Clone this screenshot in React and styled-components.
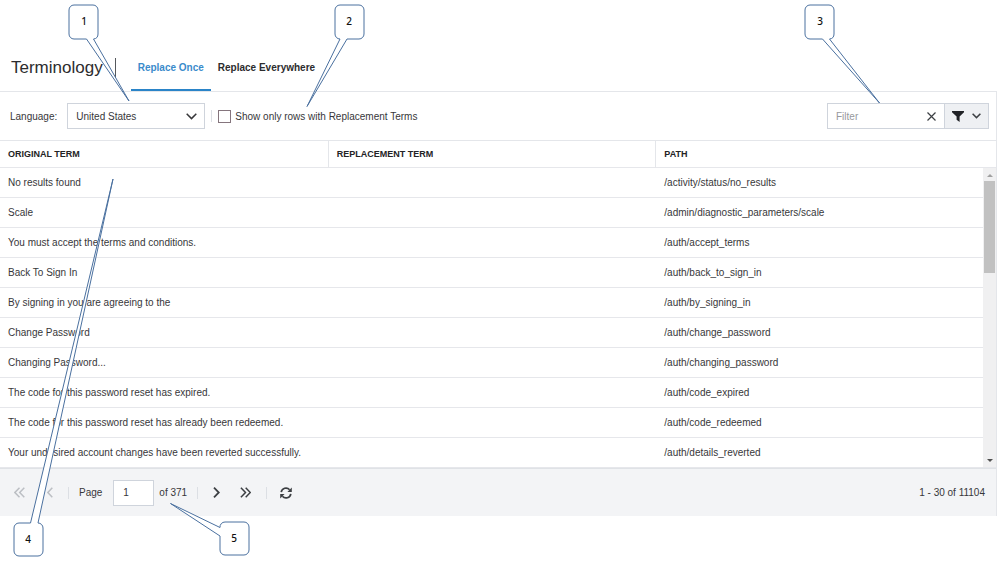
import React, { useState } from 'react';
import styled, { createGlobalStyle } from 'styled-components';

const GlobalStyle = createGlobalStyle`
  * {
    box-sizing: border-box;
  }

  body {
    margin: 0;
    background: #fff;
    color: #37373a;
    font-family: 'Liberation Sans', Arial, sans-serif;
    font-size: 10px;
  }

  button, input, select {
    margin: 0;
    color: inherit;
    font: inherit;
  }
`;

const StyledPage = styled.main`
  position: relative;
  min-height: 100vh;
  padding: 44px 1px 46px 0;
`;

const StyledHeader = styled.header`
  display: flex;
  align-items: center;
  height: 48px;
  padding-left: 11px;
  border-bottom: 1px solid #e4e6ea;

  h1 {
    margin: 0;
    padding-right: 12px;
    border-right: 1px solid #55585c;
    color: #2c2c2e;
    font-size: 17px;
    font-weight: 400;
    line-height: 19px;
  }
`;

const StyledTabs = styled.nav`
  display: flex;
  align-self: stretch;
  margin-left: 15px;
`;

const StyledTab = styled.button`
  padding: 2px 7px 0;
  border: 0;
  border-bottom: 2px solid ${({ $active }) => ($active ? '#2a84c8' : 'transparent')};
  background: none;
  color: ${({ $active }) => ($active ? '#3b8bcb' : '#2c2c2e')};
  font-weight: 700;
`;

const StyledFrame = styled.section`
  border-right: 1px solid #e4e6ea;
`;

const StyledToolbar = styled.div`
  display: flex;
  align-items: center;
  height: 48px;
  padding: 0 7px 0 10px;
`;

const StyledSelect = styled.div`
  position: relative;
  width: 138px;
  margin-left: 10px;

  select {
    width: 100%;
    height: 26px;
    padding: 0 8px;
    border: 1px solid #cfd4dc;
    border-radius: 0;
    background: #fff;
    appearance: none;
  }

  svg {
    position: absolute;
    top: 10px;
    right: 8px;
    pointer-events: none;
  }
`;

const StyledSeparator = styled.span`
  width: 1px;
  height: 12px;
  margin: 0 ${({ $gap = 6 }) => $gap}px;
  background: #dcdfe4;
`;

const StyledCheck = styled.label`
  display: flex;
  align-items: center;
  gap: 4px;

  input {
    width: 13px;
    height: 13px;
    border: 1px solid #85757d;
    background: #fff;
    appearance: none;
  }

  input:checked {
    background: #3b8bcb;
  }
`;

const StyledFilter = styled.div`
  display: flex;
  width: 162px;
  height: 26px;
  margin-left: auto;
  border: 1px solid #cfd4dc;

  input {
    flex: 1;
    min-width: 0;
    padding: 0 8px;
    border: 0;
    background: #fff;
  }

  input::placeholder {
    color: #97999c;
    opacity: 1;
  }
`;

const StyledIconButton = styled.button`
  display: flex;
  align-items: center;
  justify-content: center;
  width: ${({ $width = 26 }) => $width}px;
  padding: 0;
  border: 0;
  background: none;
  color: #3c3f43;

  &:disabled {
    color: #bcbfc4;
  }
`;

const StyledFilterMenu = styled(StyledIconButton)`
  gap: 8px;
  border-left: 1px solid #cfd4dc;
  background: #eef0f3;
`;

const StyledGrid = styled.div`
  position: relative;
  border-top: 1px solid #e4e6ea;
`;

const StyledTable = styled.table`
  width: 100%;
  border-collapse: separate;
  border-spacing: 0;
  table-layout: fixed;

  th,
  td {
    padding: 0 8px;
    border-bottom: 1px solid #e6e7eb;
    text-align: left;
    white-space: nowrap;
  }

  th {
    height: 27px;
    color: #232325;
    font-size: 9px;
    font-weight: 700;
    text-transform: uppercase;
  }

  th + th {
    border-left: 1px solid #e4e6ea;
  }

  td {
    height: 30px;
  }

  td + td {
    padding-left: 9px;
  }
`;

const StyledScrollbar = styled.div`
  position: absolute;
  top: 27px;
  right: 0;
  bottom: 1px;
  display: flex;
  flex-direction: column;
  align-items: center;
  width: 13px;
  padding: 6px 0 5px;
  background: #f0f0f1;
`;

const StyledThumb = styled.span`
  width: 11px;
  height: 92px;
  margin: 4px 0 auto;
  background: #c1c1c1;
`;

const StyledPager = styled.footer`
  display: flex;
  align-items: center;
  height: 48px;
  padding: 0 11px 0 6px;
  border-top: 1px solid #dfe2e6;
  background: #f3f4f6;

  label {
    margin-left: 10px;
  }

  input {
    width: 41px;
    height: 26px;
    margin: 0 5px 0 11px;
    padding: 0 9px;
    border: 1px solid #cfd4dc;
    background: #fff;
  }
`;

const StyledRange = styled.span`
  margin-left: auto;
`;

const StyledCallouts = styled.svg`
  position: absolute;
  top: 0;
  left: 0;
  pointer-events: none;

  path {
    fill: #fff;
    stroke: #4a709f;
    stroke-linejoin: round;
  }

  text {
    fill: #111;
    font-family: 'Noto Sans', 'Open Sans', sans-serif;
    font-size: 10px;
    font-weight: 500;
    text-anchor: middle;
  }
`;

const Icon = ({ width, height, d, strokeWidth = 1.5 }) => (
  <svg width={width} height={height} viewBox={`0 0 ${width} ${height}`} aria-hidden="true">
    <path d={d} fill="none" stroke="currentColor" strokeWidth={strokeWidth} />
  </svg>
);

const FunnelIcon = () => (
  <svg width="12" height="11" viewBox="0 0 12 11" aria-hidden="true">
    <path d="M0 0H12V1.3L7.6 5.6V11L4.6 8.8V5.6L0 1.3Z" fill="#202226" />
  </svg>
);

const RefreshIcon = () => (
  <svg width="12" height="12" viewBox="0 0 12 12" aria-hidden="true">
    <path
      d="M1.2 5.2A4.8 4.8 0 0 1 9.6 2.8M10.8 6.8A4.8 4.8 0 0 1 2.4 9.2"
      fill="none"
      stroke="currentColor"
      strokeWidth="1.7"
    />
    <path d="M11.8 .6V5H7.4ZM.2 11.4V7H4.6Z" fill="currentColor" />
  </svg>
);

const rows = [
  ['No results found', '/activity/status/no_results'],
  ['Scale', '/admin/diagnostic_parameters/scale'],
  ['You must accept the terms and conditions.', '/auth/accept_terms'],
  ['Back To Sign In', '/auth/back_to_sign_in'],
  ['By signing in you are agreeing to the', '/auth/by_signing_in'],
  ['Change Password', '/auth/change_password'],
  ['Changing Password...', '/auth/changing_password'],
  ['The code for this password reset has expired.', '/auth/code_expired'],
  ['The code for this password reset has already been redeemed.', '/auth/code_redeemed'],
  ['Your undesired account changes have been reverted successfully.', '/auth/details_reverted'],
];

const callouts = [
  { x: 84, y: 25, d: 'M74 5H93a5 5 0 0 1 5 5V34a5 5 0 0 1-4.5 5L129 101 86.5 39H74a5 5 0 0 1-5-5V10a5 5 0 0 1 5-5Z' },
  { x: 349, y: 25, d: 'M340 5H359a5 5 0 0 1 5 5V34a5 5 0 0 1-5 5H347L307 106.5 340 39a5 5 0 0 1-5-5V10a5 5 0 0 1 5-5Z' },
  { x: 820, y: 25, d: 'M810 5H829a5 5 0 0 1 5 5V34a5 5 0 0 1-4.5 5L879.5 103 822.5 39H810a5 5 0 0 1-5-5V10a5 5 0 0 1 5-5Z' },
  { x: 28, y: 543, d: 'M19 523H30.5L113 179 38 523a5 5 0 0 1 5 5V551a5 5 0 0 1-5 5H19a5 5 0 0 1-5-5V528a5 5 0 0 1 5-5Z' },
  { x: 234, y: 542, d: 'M225 522H244a5 5 0 0 1 5 5V550a5 5 0 0 1-5 5H225a5 5 0 0 1-5-5V536L170.5 503.5 220 527.5a5 5 0 0 1 5-5.5Z' },
];

const tabs = ['Replace Once', 'Replace Everywhere'];

const App = () => {
  const [activeTab, setActiveTab] = useState(tabs[0]);
  const [filter, setFilter] = useState('');

  return (
    <StyledPage>
      <GlobalStyle />
      <StyledHeader>
        <h1>Terminology</h1>
        <StyledTabs>
          {tabs.map(tab => (
            <StyledTab key={tab} $active={tab === activeTab} onClick={() => setActiveTab(tab)}>
              {tab}
            </StyledTab>
          ))}
        </StyledTabs>
      </StyledHeader>

      <StyledFrame>
        <StyledToolbar>
          <label htmlFor="language">Language:</label>
          <StyledSelect>
            <select id="language">
              <option>United States</option>
            </select>
            <Icon width={11} height={7} d="M.7 .8 5.5 5.6 10.3 .8" />
          </StyledSelect>
          <StyledSeparator />
          <StyledCheck>
            <input type="checkbox" />
            Show only rows with Replacement Terms
          </StyledCheck>
          <StyledFilter>
            <input
              aria-label="Filter"
              placeholder="Filter"
              value={filter}
              onChange={e => setFilter(e.target.value)}
            />
            <StyledIconButton aria-label="Clear filter" onClick={() => setFilter('')}>
              <Icon width={9} height={9} d="M.5 .5 8.5 8.5M8.5 .5 .5 8.5" strokeWidth={1.2} />
            </StyledIconButton>
            <StyledFilterMenu $width={44} aria-label="Filter options">
              <FunnelIcon />
              <Icon width={9} height={6} d="M.6 .7 4.5 4.6 8.4 .7" />
            </StyledFilterMenu>
          </StyledFilter>
        </StyledToolbar>

        <StyledGrid>
          <StyledTable>
            <colgroup>
              <col width="32.9%" />
              <col width="32.9%" />
              <col />
            </colgroup>
            <thead>
              <tr>
                <th>Original Term</th>
                <th>Replacement Term</th>
                <th>Path</th>
              </tr>
            </thead>
            <tbody>
              {rows.map(([term, path]) => (
                <tr key={path}>
                  <td>{term}</td>
                  <td />
                  <td>{path}</td>
                </tr>
              ))}
            </tbody>
          </StyledTable>
          <StyledScrollbar aria-hidden="true">
            <svg width="6" height="3" viewBox="0 0 6 3">
              <path d="M3 0 6 3H0Z" fill="#a0a0a0" />
            </svg>
            <StyledThumb />
            <svg width="6" height="3" viewBox="0 0 6 3">
              <path d="M0 0H6L3 3Z" fill="#505050" />
            </svg>
          </StyledScrollbar>
        </StyledGrid>

        <StyledPager>
          <StyledIconButton aria-label="First page" disabled>
            <Icon width={11} height={11} d="M5.5 .7 .9 5.5 5.5 10.3M10.3 .7 5.7 5.5 10.3 10.3" />
          </StyledIconButton>
          <StyledIconButton $width={36} aria-label="Previous page" disabled>
            <Icon width={6} height={11} d="M5.3 .7 .9 5.5 5.3 10.3" />
          </StyledIconButton>
          <StyledSeparator $gap={0} />
          <label htmlFor="page">Page</label>
          <input id="page" defaultValue="1" />
          of 371
          <StyledSeparator $gap={10} />
          <StyledIconButton $width={16} aria-label="Next page">
            <Icon width={7} height={11} d="M1 .7 5.8 5.5 1 10.3" strokeWidth={1.8} />
          </StyledIconButton>
          <StyledIconButton $width={42} aria-label="Last page">
            <Icon width={11} height={11} d="M.9 .7 5.5 5.5 .9 10.3M5.7 .7 10.3 5.5 5.7 10.3" />
          </StyledIconButton>
          <StyledSeparator $gap={0} />
          <StyledIconButton $width={38} aria-label="Refresh">
            <RefreshIcon />
          </StyledIconButton>
          <StyledRange>1 - 30 of 11104</StyledRange>
        </StyledPager>
      </StyledFrame>

      <StyledCallouts width="998" height="562" viewBox="0 0 998 562">
        {callouts.map(({ x, y, d }, i) => (
          <React.Fragment key={i}>
            <path d={d} />
            <text x={x} y={y}>{i + 1}</text>
          </React.Fragment>
        ))}
      </StyledCallouts>
    </StyledPage>
  );
};

export default App;
